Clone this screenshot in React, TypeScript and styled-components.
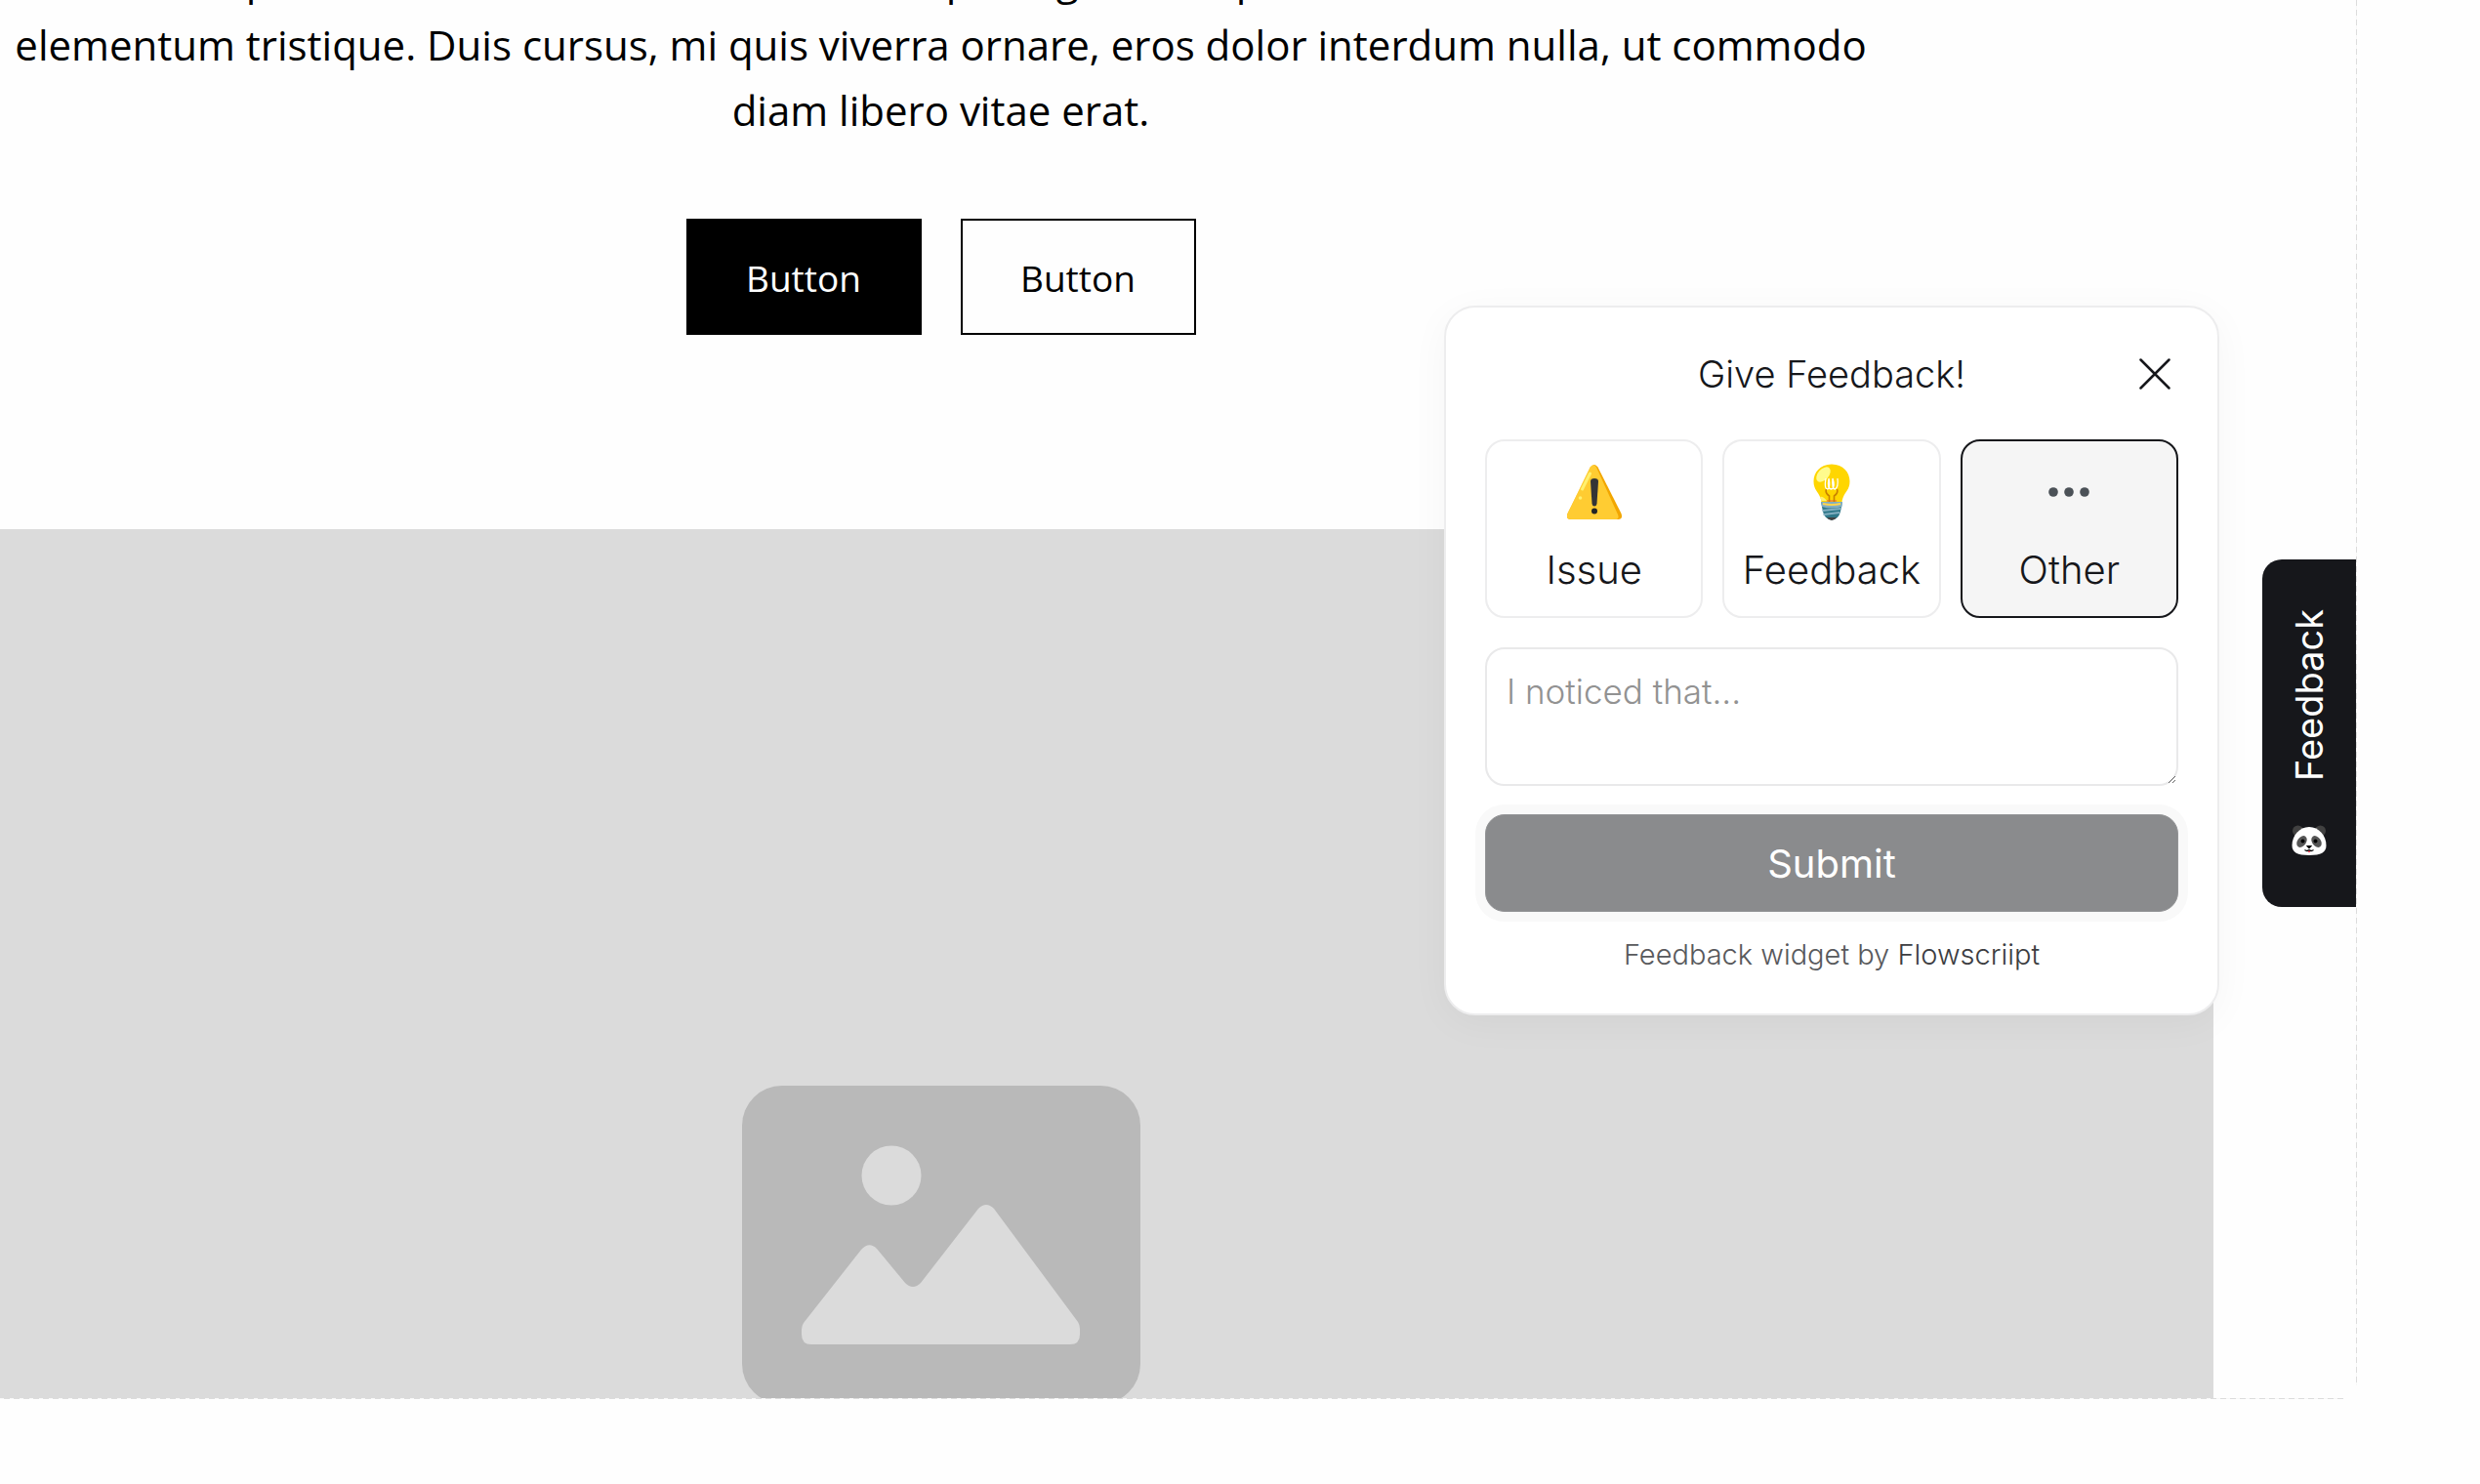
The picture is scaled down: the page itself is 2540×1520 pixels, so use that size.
import React, { useState } from "react";
import styled, { createGlobalStyle } from "styled-components";

const bodyFont = '"Open Sans", "Noto Sans", sans-serif';
const widgetFont = 'Inter, "Liberation Sans", sans-serif';

const GlobalStyle = createGlobalStyle`
  *, *::before, *::after { box-sizing: border-box; }
  body { margin: 0; background: #fefefe; overflow: hidden; }
  button, textarea { font: inherit; color: inherit; margin: 0; }
`;

const Canvas = styled.div`
  position: relative;
  height: calc(100vh - 87px);
  margin-right: 126px;
  overflow: hidden;
  background: #fefefe;

  /* dashed guide lines along the right and bottom edges */
  &::before,
  &::after {
    content: "";
    position: absolute;
    z-index: 1;
    pointer-events: none;
  }
  &::before {
    top: 0;
    right: 0;
    bottom: 14px;
    width: 1px;
    background: repeating-linear-gradient(to bottom, #dcdcdc 0 6px, #f8f8f8 6px 10px);
  }
  &::after {
    left: 0;
    right: 14px;
    bottom: 0;
    height: 1px;
    background: repeating-linear-gradient(to right, #f8f8f8 0 4px, #dcdcdc 4px 10px);
  }
`;

const Section = styled.section`
  display: flex;
  flex-direction: column;
  align-items: center;
  margin: 0 147px 0 -340px;
  font-family: ${bodyFont};
  color: #000;
`;

const Intro = styled.div`
  height: 146px;
  display: flex;
  flex-direction: column;
  justify-content: flex-end;
`;

const Paragraph = styled.p`
  margin: 0;
  font-size: 42px;
  line-height: 67px;
  text-align: center;
  white-space: nowrap;
`;

const Actions = styled.div`
  display: flex;
  gap: 40px;
  margin: 78px 0 199px;
`;

const ActionButton = styled.button<{ $primary?: boolean }>`
  width: 241px;
  height: 119px;
  padding: 2px 0 0;
  border: 2px solid #000;
  background: ${(p) => (p.$primary ? "#000" : "#fefefe")};
  color: ${(p) => (p.$primary ? "#fff" : "#000")};
  font-size: 37px;
  cursor: pointer;
`;

const Placeholder = styled.div`
  align-self: stretch;
  display: flex;
  justify-content: center;
  height: 1478px;
  padding-top: 570px;
  background: #dbdbdb;
`;

const Panel = styled.form`
  position: absolute;
  top: 313px;
  right: 141px;
  width: 794px;
  padding: 40px;
  display: flex;
  flex-direction: column;
  border: 2px solid #ededee;
  border-radius: 32px;
  background: #fff;
  box-shadow: 0 8px 40px rgba(0, 0, 0, 0.04);
  color: #16171b;
  font-family: ${widgetFont};
  font-weight: 300;
`;

const PanelHeader = styled.header`
  display: grid;
  grid-template-columns: 1fr auto 1fr;
  align-items: center;
  height: 56px;
  margin-bottom: 39px;
`;

const Title = styled.h2`
  grid-column: 2;
  margin: 0;
  font-size: 38px;
  font-weight: 300;
  line-height: 56px;
`;

const CloseButton = styled.button`
  justify-self: end;
  display: flex;
  padding: 8px;
  border: 0;
  background: none;
  cursor: pointer;
`;

const Choices = styled.div`
  display: grid;
  grid-template-columns: repeat(3, 1fr);
  gap: 20px;
  margin-bottom: 30px;
`;

const Choice = styled.button<{ $active: boolean }>`
  display: flex;
  flex-direction: column;
  align-items: center;
  gap: 20px;
  height: 183px;
  padding: 22px 0 0;
  border: 2px solid ${(p) => (p.$active ? "#16171b" : "#ededee")};
  border-radius: 20px;
  background: ${(p) => (p.$active ? "#f5f5f5" : "#fff")};
  font-size: 40px;
  line-height: 60px;
  cursor: pointer;
`;

const Message = styled.textarea`
  display: block;
  width: 100%;
  height: 142px;
  padding: 18px 20px;
  margin-bottom: 29px;
  border: 2px solid #e9e9ea;
  border-radius: 20px;
  background: #fff;
  font-size: 35px;
  line-height: 50px;
  resize: vertical;
  outline: none;
  &::placeholder { color: #929292; opacity: 1; }
`;

const Submit = styled.button`
  height: 100px;
  padding: 0;
  border: 1px solid #939496;
  border-radius: 20px;
  background: #8a8b8d;
  box-shadow: 0 0 0 10px #f9f9f9;
  color: #fff;
  font-size: 40px;
  font-weight: 400;
  cursor: pointer;
`;

const Credit = styled.p`
  margin: 24px 0 0;
  color: #58595c;
  font-size: 29px;
  line-height: 40px;
  text-align: center;
`;

const CreditLink = styled.a`
  color: #3c3d41;
  text-decoration: none;
`;

const FeedbackTab = styled.button`
  position: absolute;
  top: 573px;
  right: 1px;
  width: 96px;
  height: 356px;
  padding: 0;
  display: flex;
  flex-direction: column;
  align-items: center;
  justify-content: center;
  gap: 44px;
  border: 0;
  border-radius: 20px 0 0 20px;
  background: #16171b;
  color: #fff;
  font-family: ${widgetFont};
  font-size: 38px;
  line-height: 48px;
  cursor: pointer;
`;

const TabText = styled.span`
  writing-mode: vertical-rl;
  transform: rotate(180deg);
`;

const WarningIcon = () => (
  <svg width="60" height="60" viewBox="0 0 60 60" aria-hidden="true">
    <path d="M26.5 4.5Q30 -.5 33.500 4.500L57.500 52Q59.500 58 54 58H6Q.5 58 2.500 52Z" fill="#f2a600" />
    <path d="M25.500 4.500Q29 -.2 32 4.500L54 53Q56 58 51 58H6Q.5 58 2.500 52Z" fill="#ffcc32" />
    <path d="M25.500 11L17.500 27" stroke="#fff170" strokeWidth="3" strokeLinecap="round" />
    <circle cx="15.500" cy="36" r="1.800" fill="#fff170" />
    <path d="M26 19Q26 16 30 16T34 19L32.500 42Q32 44.500 30 44.500T27.500 42Z" fill="#333436" />
    <circle cx="30" cy="49.500" r="3" fill="#232426" />
  </svg>
);

const BulbIcon = () => (
  <svg width="60" height="60" viewBox="0 0 60 60" aria-hidden="true">
    <path d="M30 1.500C18 1.500 11.500 10 11.500 19C11.500 29 18 30 19.500 40H40.500C42 30 48.500 29 48.500 19C48.500 10 42 1.500 30 1.500Z" fill="#ffd600" />
    <ellipse cx="21.500" cy="12" rx="9" ry="5.500" transform="rotate(-48 21.500 12)" fill="#fffb8d" />
    <path d="M18 35Q21 34 25 39L19.500 39Z" fill="#fff176" />
    <path d="M25 38H35V41H25Z" fill="#f79329" />
    <path d="M27.500 40V34Q23 31 24.500 27M32.500 40V34Q37 31 35.500 27" fill="none" stroke="#c88200" strokeWidth="1.600" />
    <path d="M24 16Q22 27 26 27Q29 25 27 16Q25 27 30 27Q34 25 31 16Q30 27 33.500 27Q37 25 36 16" fill="none" stroke="#fff" strokeWidth="1.300" />
    <path d="M19 40H41L39 50Q37 58 30 58.500Q23 58 21 50Z" fill="#2f7889" />
    <path d="M19 40H41L40.500 45Q30 48 20 45Z" fill="#82aec0" />
    <path d="M21 42Q30 44 39 42" fill="none" stroke="#ffd54f" strokeWidth="2" />
    <path d="M20.500 49L39.500 47M21.500 53L38 51" stroke="#82aec0" strokeWidth="1.800" />
    <path d="M25 56H35Q33 59 30 59T25 56" fill="#424242" />
  </svg>
);

const DotsIcon = () => (
  <svg width="60" height="60" viewBox="0 0 60 60" fill="#4b5157" aria-hidden="true">
    <circle cx="14" cy="30" r="4.800" />
    <circle cx="30" cy="30" r="4.800" />
    <circle cx="46" cy="30" r="4.800" />
  </svg>
);

const CloseIcon = () => (
  <svg width="32" height="32" viewBox="0 0 32 32" aria-hidden="true">
    <path d="M1.500 1.500L30.500 30.500M30.500 1.500L1.500 30.500" stroke="#16171b" strokeWidth="2.500" strokeLinecap="round" />
  </svg>
);

const PandaIcon = () => (
  <svg width="36" height="34" viewBox="0 0 36 34" aria-hidden="true">
    <circle cx="6.500" cy="7" r="5.500" fill="#414141" />
    <circle cx="29.500" cy="7" r="5.500" fill="#414141" />
    <path d="M18 3C8 3 .5 12 .5 22C.5 29 6 32 18 32S35.500 29 35.500 22C35.500 12 28 3 18 3Z" fill="#fff" />
    <ellipse cx="10.500" cy="18" rx="4.500" ry="6.500" transform="rotate(35 10.500 18)" fill="#555" />
    <ellipse cx="25.500" cy="18" rx="4.500" ry="6.500" transform="rotate(-35 25.500 18)" fill="#555" />
    <circle cx="11.500" cy="17.500" r="2" fill="#000" />
    <circle cx="24.500" cy="17.500" r="2" fill="#000" />
    <path d="M15.500 22.500H20.500L18 25Z" fill="#000" stroke="#000" strokeLinejoin="round" />
    <path d="M13.500 26.500Q16 28.500 18 26.500Q20 28.500 22.500 26.500" fill="none" stroke="#000" strokeWidth="1.200" />
    <path d="M17 27.500H19V29H17Z" fill="#e8455a" />
  </svg>
);

const PictureIcon = () => (
  <svg width="408" height="326" viewBox="0 0 408 326" aria-hidden="true">
    <rect width="408" height="326" rx="41" fill="#b9b9b9" />
    <circle cx="153" cy="92" r="30.500" fill="#dbdbdb" />
    <path
      d="M61 250Q61 246 63 243L122 168Q130 159 138 167L167 202Q175 210 183 202L242 126Q250 118 258 126L344 242Q346 245 346 249V255Q346 265 336 265H71Q61 265 61 255Z"
      fill="#dbdbdb"
    />
  </svg>
);

const choices = [
  { label: "Issue", Icon: WarningIcon },
  { label: "Feedback", Icon: BulbIcon },
  { label: "Other", Icon: DotsIcon },
];

export default function App() {
  const [selected, setSelected] = useState("Other");
  const [open, setOpen] = useState(true);

  return (
    <>
      <GlobalStyle />
      <Canvas>
        <Section>
          <Intro>
            <Paragraph>
              Lorem ipsum dolor sit amet, consectetur adipiscing elit. Suspendisse varius enim in eros
              <br />
              elementum tristique. Duis cursus, mi quis viverra ornare, eros dolor interdum nulla, ut commodo
              <br />
              diam libero vitae erat.
            </Paragraph>
          </Intro>
          <Actions>
            <ActionButton $primary>Button</ActionButton>
            <ActionButton>Button</ActionButton>
          </Actions>
          <Placeholder>
            <PictureIcon />
          </Placeholder>
        </Section>
        {open && (
          <Panel onSubmit={(e) => e.preventDefault()}>
            <PanelHeader>
              <Title>Give Feedback!</Title>
              <CloseButton type="button" aria-label="Close" onClick={() => setOpen(false)}>
                <CloseIcon />
              </CloseButton>
            </PanelHeader>
            <Choices>
              {choices.map(({ label, Icon }) => (
                <Choice
                  key={label}
                  type="button"
                  aria-pressed={selected === label}
                  $active={selected === label}
                  onClick={() => setSelected(label)}
                >
                  <Icon />
                  {label}
                </Choice>
              ))}
            </Choices>
            <Message aria-label="Message" placeholder="I noticed that..." />
            <Submit type="submit">Submit</Submit>
            <Credit>
              Feedback widget by <CreditLink href="#flowscriipt">Flowscriipt</CreditLink>
            </Credit>
          </Panel>
        )}
        <FeedbackTab type="button" onClick={() => setOpen(!open)}>
          <TabText>Feedback</TabText>
          <PandaIcon />
        </FeedbackTab>
      </Canvas>
    </>
  );
}
